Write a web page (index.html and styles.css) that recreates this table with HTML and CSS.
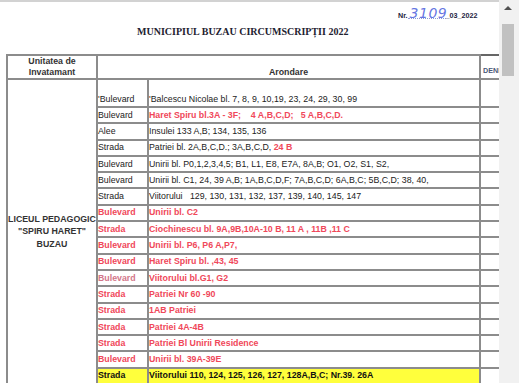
FILE: index.html
```html
<!DOCTYPE html>
<html lang="ro">
<head>
<meta charset="utf-8">
<title>Municipiul Buzau Circumscripții 2022</title>
<link rel="stylesheet" href="styles.css">
</head>
<body>
<div class="viewer">
  <div class="page">
    <div class="nr-line">
      <span class="nr">Nr.</span>
      <span class="nr-fill"><span class="hand">3109</span></span>
      <span class="nr">_03_2022</span>
    </div>
    <h1 class="title">MUNICIPIUL BUZAU CIRCUMSCRIPȚII 2022</h1>
    <table class="grid">
      <colgroup>
        <col class="c-unit">
        <col class="c-type">
        <col class="c-arr">
        <col class="c-den">
      </colgroup>
      <thead>
        <tr class="head-row">
          <th class="h-unit">Unitatea de<br>Invatamant</th>
          <th class="h-arr" colspan="2">Arondare</th>
          <th class="h-den">DENI</th>
        </tr>
      </thead>
      <tbody>
        <tr class="row first">
          <td class="unit" rowspan="18">LICEUL PEDAGOGIC<br>"SPIRU HARET"<br>BUZAU</td>
          <td class="type">'Bulevard</td>
          <td class="arr">'Balcescu Nicolae bl. 7, 8, 9, 10,19, 23, 24, 29, 30, 99</td>
          <td class="den"></td>
        </tr>
        <tr class="row">
          <td class="type">Bulevard</td>
          <td class="arr red">Haret Spiru bl.3A - 3F;&nbsp;&nbsp;&nbsp; 4 A,B,C,D;&nbsp;&nbsp; 5 A,B,C,D.</td>
          <td class="den"></td>
        </tr>
        <tr class="row">
          <td class="type">Alee</td>
          <td class="arr">Insulei 133 A,B; 134, 135, 136</td>
          <td class="den"></td>
        </tr>
        <tr class="row">
          <td class="type">Strada</td>
          <td class="arr">Patriei bl. 2A,B,C,D.; 3A,B,C,D, <span class="red">24 B</span></td>
          <td class="den"></td>
        </tr>
        <tr class="row">
          <td class="type">Bulevard</td>
          <td class="arr">Unirii bl. P0,1,2,3,4,5; B1, L1, E8, E7A, 8A,B; O1, O2, S1, S2,</td>
          <td class="den"></td>
        </tr>
        <tr class="row">
          <td class="type">Bulevard</td>
          <td class="arr">Unirii bl. C1, 24, 39 A,B; 1A,B,C,D,F; 7A,B,C,D; 6A,B,C; 5B,C,D; 38, 40,</td>
          <td class="den"></td>
        </tr>
        <tr class="row">
          <td class="type">Strada</td>
          <td class="arr">Viitorului&nbsp;&nbsp; 129, 130, 131, 132, 137, 139, 140, 145, 147</td>
          <td class="den"></td>
        </tr>
        <tr class="row">
          <td class="type red">Bulevard</td>
          <td class="arr red">Unirii bl. C2</td>
          <td class="den"></td>
        </tr>
        <tr class="row">
          <td class="type red">Strada</td>
          <td class="arr red">Ciochinescu bl. 9A,9B,10A-10 B, 11 A , 11B ,11 C</td>
          <td class="den"></td>
        </tr>
        <tr class="row">
          <td class="type red">Bulevard</td>
          <td class="arr red">Unirii bl. P6, P6 A,P7,</td>
          <td class="den"></td>
        </tr>
        <tr class="row">
          <td class="type red">Bulevard</td>
          <td class="arr red">Haret Spiru bl. ,43, 45</td>
          <td class="den"></td>
        </tr>
        <tr class="row">
          <td class="type muted">Bulevard</td>
          <td class="arr red">Viitorului bl.G1, G2</td>
          <td class="den"></td>
        </tr>
        <tr class="row">
          <td class="type red">Strada</td>
          <td class="arr red">Patriei Nr 60 -90</td>
          <td class="den"></td>
        </tr>
        <tr class="row">
          <td class="type red">Strada</td>
          <td class="arr red">1AB Patriei</td>
          <td class="den"></td>
        </tr>
        <tr class="row">
          <td class="type red">Strada</td>
          <td class="arr red">Patriei 4A-4B</td>
          <td class="den"></td>
        </tr>
        <tr class="row">
          <td class="type red">Strada</td>
          <td class="arr red">Patriei Bl Unirii Residence</td>
          <td class="den"></td>
        </tr>
        <tr class="row">
          <td class="type red">Bulevard</td>
          <td class="arr red">Unirii bl. 39A-39E</td>
          <td class="den"></td>
        </tr>
        <tr class="row hl">
          <td class="type strong">Strada</td>
          <td class="arr strong">Viitorului 110, 124, 125, 126, 127, 128A,B,C; Nr.39. 26A</td>
          <td class="den"></td>
        </tr>
      </tbody>
    </table>
  </div>
  <div class="scrollbar">
    <div class="sb-arrow"></div>
    <div class="sb-thumb"></div>
  </div>
</div>
</body>
</html>
```
FILE: styles.css
```css
html, body {
  margin: 0;
  padding: 0;
  background: #ffffff;
}

body {
  font-family: "Liberation Sans", Arial, sans-serif;
  color: #222;
}

.viewer {
  display: flex;
  width: 519px;
  height: 383px;
  overflow: hidden;
}

.page {
  width: 499px;
  flex: none;
  overflow: hidden;
  border-top: 2px solid #d2d2d2;
  box-sizing: border-box;
  padding-left: 6px;
}

.nr-line {
  display: flex;
  align-items: flex-end;
  height: 18px;
  padding-left: 392px;
}

.nr {
  font-size: 7.2px;
  font-weight: bold;
  color: #1c2340;
  line-height: 8px;
  flex: none;
}

.nr-fill {
  display: block;
  flex: none;
  width: 38px;
  height: 8px;
  border-bottom: 1px dotted #8d9ad8;
  margin-bottom: 1px;
  position: relative;
}

.hand {
  position: absolute;
  left: 2px;
  bottom: -2px;
  font-family: "DejaVu Sans", sans-serif;
  font-weight: 200;
  font-style: italic;
  font-size: 14px;
  line-height: 14px;
  color: #6676e2;
  letter-spacing: 0.5px;
}

.title {
  margin: 0;
  height: 34px;
  padding-left: 131px;
  padding-top: 6px;
  box-sizing: border-box;
  font-family: "Liberation Serif", "Times New Roman", serif;
  font-weight: bold;
  font-size: 10px;
  line-height: 12px;
  color: #1e2230;
}

.grid {
  border-collapse: collapse;
  table-layout: fixed;
  width: 560px;
  font-size: 8.8px;
}

.c-unit { width: 90px; }
.c-type { width: 51px; }
.c-arr { width: 332px; }
.c-den { width: 87px; }

.grid th,
.grid td {
  border: 2px solid #8c8c8c;
  padding: 0;
  white-space: nowrap;
}

.head-row {
  height: 21px;
}

.grid th {
  font-weight: bold;
  color: #333;
  vertical-align: bottom;
  text-align: center;
  line-height: 10.5px;
  padding-bottom: 1px;
}

.h-unit {
  border-left-color: #555;
  border-top-color: #666;
}

.h-arr {
  border-top-color: #666;
}

.grid .h-den {
  border-left-color: #444;
  border-top-color: #666;
  border-right: none;
  text-align: left;
  padding-left: 2px;
  padding-bottom: 2px;
  font-size: 7.2px;
  color: #4a5878;
}

.row {
  height: 16.3px;
}

.row.first {
  height: 28px;
}

.row.first .type,
.row.first .arr {
  vertical-align: bottom;
  padding-bottom: 1px;
}

.unit {
  border-left-color: #555;
  text-align: center;
  vertical-align: middle;
  font-weight: bold;
  line-height: 12.5px;
  color: #333;
}

.type {
  padding-left: 3px;
  vertical-align: middle;
  line-height: 11px;
}

.arr {
  padding-left: 2px;
  vertical-align: middle;
  line-height: 11px;
}

.grid .den {
  border-left-color: #444;
  border-right: none;
}

.red {
  color: #f0485a;
  font-weight: bold;
}

.muted {
  color: #d3768a;
  font-weight: bold;
}

.strong {
  font-weight: bold;
  color: #111;
}

.hl .type,
.hl .arr {
  background: #ffff3c;
}

.scrollbar {
  width: 20px;
  flex: none;
  background: #f1f1f1;
  box-sizing: border-box;
  padding: 0 5px 0 3px;
  display: flex;
  flex-direction: column;
  align-items: center;
}

.sb-arrow {
  width: 0;
  height: 0;
  margin-top: 6px;
  border-left: 4px solid transparent;
  border-right: 4px solid transparent;
  border-bottom: 4px solid #505050;
}

.sb-thumb {
  margin-top: 14px;
  width: 12px;
  height: 52px;
  background: #c1c1c1;
}
```
